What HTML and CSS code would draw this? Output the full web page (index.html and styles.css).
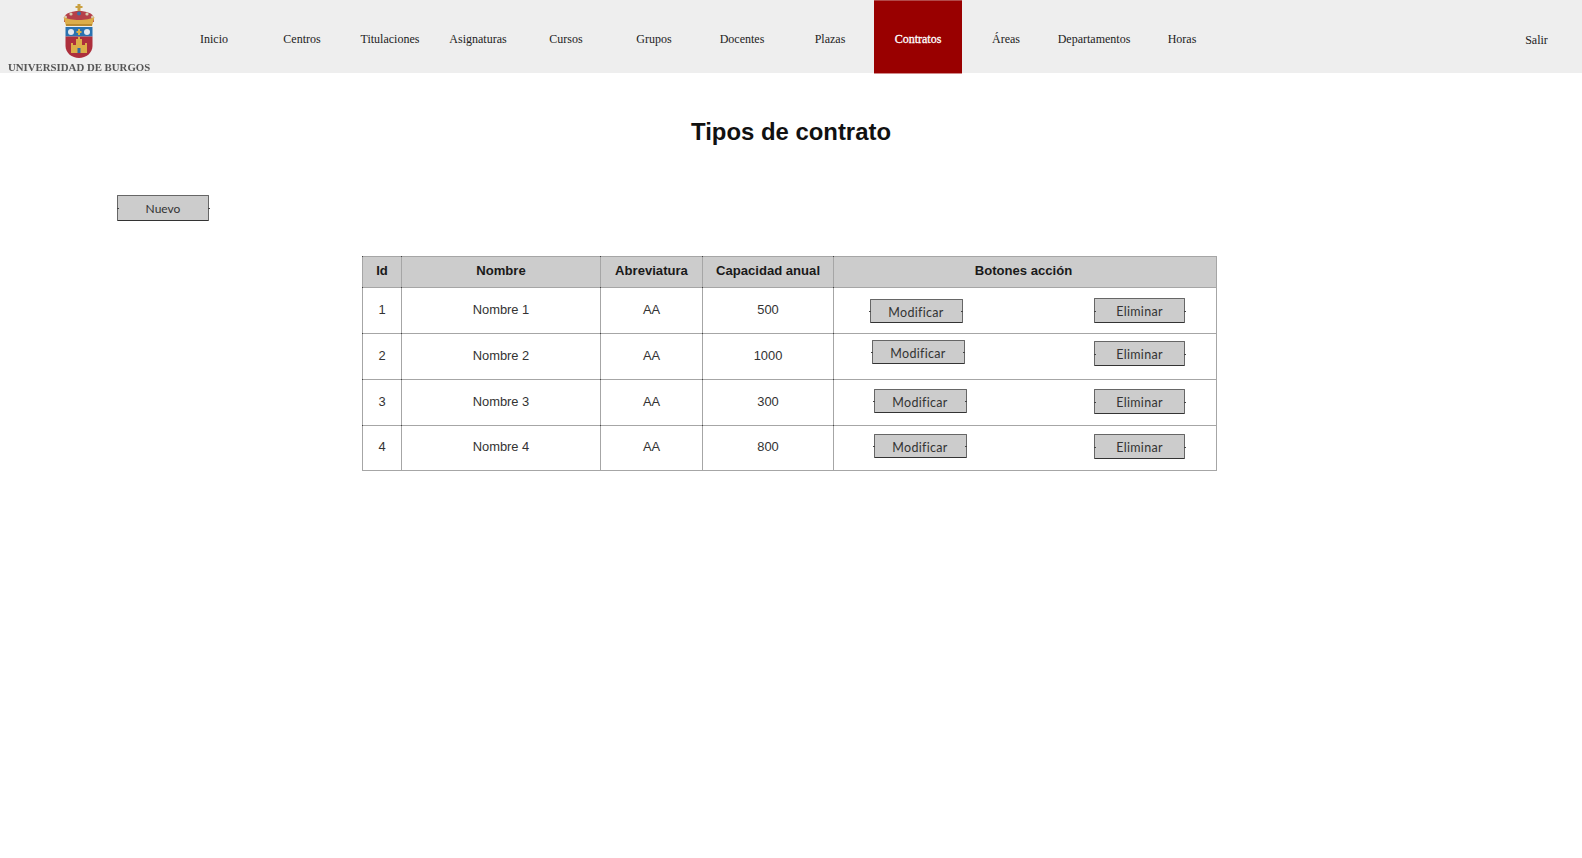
FILE: index.html
```html
<!DOCTYPE html>
<html lang="es">
<head>
<meta charset="utf-8">
<title>Tipos de contrato</title>
<link rel="stylesheet" href="styles.css">
</head>
<body>
<header class="topbar">
  <div class="brand">
    <svg class="crest" width="34" height="56" viewBox="0 0 34 56" aria-hidden="true">
      <rect x="15.5" y="1" width="3" height="8" fill="#c9a040"/>
      <rect x="13.5" y="3" width="7" height="2" fill="#c9a040"/>
      <path d="M2 15 C3 10 10 8 17 8 C24 8 31 10 32 15 L32 19 L2 19 Z" fill="#b5404a"/>
      <circle cx="3.5" cy="14" r="1.5" fill="#d8cdb0"/><circle cx="9" cy="11" r="1.6" fill="#d8cdb0"/><circle cx="17" cy="10.5" r="2" fill="#3a6ea8"/><circle cx="25" cy="11" r="1.6" fill="#d8cdb0"/><circle cx="30.5" cy="14" r="1.5" fill="#d8cdb0"/>
      <path d="M1.5 14 C8 18 26 18 32.5 14 L30 23 L4 23 Z" fill="#dcae4a"/>
      <rect x="4" y="21" width="26" height="2" fill="#b98a30"/>
      <path d="M3.5 24 H30.5 V33.5 H3.5 Z" fill="#2a72b0"/>
      <circle cx="9" cy="29" r="3" fill="#e3e8ee"/><circle cx="25" cy="29" r="3" fill="#e3e8ee"/>
      <rect x="16" y="26" width="2" height="6" fill="#d6b04a"/><rect x="14.5" y="28" width="5" height="2" fill="#d6b04a"/>
      <path d="M3.5 33.5 H30.5 V43 C30.5 50 24 55 17 55 C10 55 3.5 50 3.5 43 Z" fill="#ad2f3c"/>
      <path d="M9 50 V40 H11 V42 H14 V36 H16 V34 H18 V36 H20 V42 H23 V40 H25 V50 Z" fill="#dcae48"/>
      <rect x="15.5" y="45" width="3" height="5" fill="#2f6aa0"/>
    </svg>
    <span class="brand-name">UNIVERSIDAD DE BURGOS</span>
  </div>
  <nav class="menu">
    <a class="menu-item">Inicio</a>
    <a class="menu-item">Centros</a>
    <a class="menu-item">Titulaciones</a>
    <a class="menu-item">Asignaturas</a>
    <a class="menu-item">Cursos</a>
    <a class="menu-item">Grupos</a>
    <a class="menu-item">Docentes</a>
    <a class="menu-item">Plazas</a>
    <a class="menu-item is-active">Contratos</a>
    <a class="menu-item">Áreas</a>
    <a class="menu-item">Departamentos</a>
    <a class="menu-item">Horas</a>
  </nav>
  <a class="logout">Salir</a>
</header>

<main class="content">
  <h1 class="title">Tipos de contrato</h1>
  <div class="toolbar"><button class="sketch-btn btn-new">Nuevo</button></div>
  <table class="data">
    <colgroup>
      <col class="c-id"><col class="c-name"><col class="c-abbr"><col class="c-cap"><col class="c-act">
    </colgroup>
    <thead>
      <tr><th>Id</th><th>Nombre</th><th>Abreviatura</th><th>Capacidad anual</th><th class="th-actions">Botones acción</th></tr>
    </thead>
    <tbody>
      <tr class="r1">
        <td>1</td><td>Nombre 1</td><td>AA</td><td>500</td>
        <td class="cell-actions"><div class="actions a1"><button class="sketch-btn btn-mod">Modificar</button><button class="sketch-btn btn-del">Eliminar</button></div></td>
      </tr>
      <tr class="r2">
        <td>2</td><td>Nombre 2</td><td>AA</td><td>1000</td>
        <td class="cell-actions"><div class="actions a2"><button class="sketch-btn btn-mod">Modificar</button><button class="sketch-btn btn-del">Eliminar</button></div></td>
      </tr>
      <tr class="r3">
        <td>3</td><td>Nombre 3</td><td>AA</td><td>300</td>
        <td class="cell-actions"><div class="actions a3"><button class="sketch-btn btn-mod">Modificar</button><button class="sketch-btn btn-del">Eliminar</button></div></td>
      </tr>
      <tr class="r4">
        <td>4</td><td>Nombre 4</td><td>AA</td><td>800</td>
        <td class="cell-actions"><div class="actions a4"><button class="sketch-btn btn-mod">Modificar</button><button class="sketch-btn btn-del">Eliminar</button></div></td>
      </tr>
    </tbody>
  </table>
</main>
</body>
</html>
```
FILE: styles.css
```css
* { box-sizing: border-box; }
html, body { margin: 0; height: 100%; background: #fff; }
body { font-family: "Liberation Sans", Arial, sans-serif; color: #222; overflow: hidden; }

.topbar { display: flex; align-items: stretch; height: 73px; background: #eeeeee; }
.brand { width: 170px; display: flex; flex-direction: column; align-items: flex-start; padding: 3px 0 0 8px; }
.crest { margin-left: 54px; display: block; filter: blur(.5px); }
.brand-name { font-family: "Liberation Serif", serif; font-weight: 700; font-size: 10.8px; line-height: 11px; color: #555; white-space: nowrap; margin-top: 3px; filter: blur(.3px); }
.menu { display: flex; }
.menu-item { width: 88px; display: flex; align-items: center; justify-content: center; font-family: "Liberation Serif", serif; font-size: 12px; color: #222; padding-top: 5px; }
.menu-item.is-active { background: #990000; color: #fff; -webkit-text-stroke: .3px #fff; margin-bottom: -1px; border-top: 1px solid #b24a4a; border-bottom: 1px solid #d08a8a; }
.logout { margin-left: auto; width: 90px; display: flex; align-items: center; justify-content: center; font-family: "Liberation Serif", serif; font-size: 12px; color: #222; padding: 7px 1px 0 0; }

.content { display: flex; flex-direction: column; }
.title { margin: 45px 0 0; height: 28px; line-height: 28px; text-align: center; font-size: 23.9px; font-weight: 700; color: #111; }
.toolbar { padding: 49px 0 0 117px; height: 110px; }

.sketch-btn { display: block; padding: 2px 0 0; background: #cccccc; border: 1.5px solid #666; border-bottom-color: #333; border-radius: 1px; font-family: "Lato", sans-serif; font-size: 12.5px; letter-spacing: .3px; color: #333; position: relative; }
.sketch-btn::before, .sketch-btn::after { content: ""; position: absolute; top: 50%; width: 2px; height: 1px; background: #444; }
.sketch-btn::before { left: -1.5px; }
.sketch-btn::after { right: -1.5px; }
.btn-new { width: 92px; height: 26px; padding-top: 1px; font-size: 12px; letter-spacing: 0; }
.btn-mod { width: 93px; height: 24px; }
.btn-del { width: 91px; height: 25px; }

.data { border-collapse: collapse; table-layout: fixed; width: 854px; margin-left: 362px; font-size: 12.9px; }
.c-id { width: 39px; } .c-name { width: 199px; } .c-abbr { width: 102px; } .c-cap { width: 131px; } .c-act { width: 383px; }
.data th, .data td { border: 1px solid #a6a6a6; text-align: center; padding: 0; position: relative; }
.data th::before, .data td::before { content: ""; position: absolute; left: -1px; top: -1px; width: 1px; height: 1px; background: #444; }
.data th { background: #cccccc; height: 31px; font-weight: 700; font-size: 13.1px; color: #1a1a1a; padding-bottom: 3px; }
.data th.th-actions { padding-right: 3px; }
.data td { color: #333; padding-bottom: 3px; }
.data td.cell-actions { padding: 0; vertical-align: top; }
.r1 td { height: 46px; } .r2 td { height: 46px; } .r3 td { height: 46px; } .r4 td { height: 45px; }

.actions { display: flex; justify-content: space-between; align-items: flex-start; }
.a1 { padding: 11px 31px 0 35.5px; } .a1 .btn-del { margin-top: -1px; }
.a2 { padding: 6px 31px 0 37.5px; } .a2 .btn-del { margin-top: 1px; }
.a3 { padding: 9px 31px 0 39.5px; }
.a4 { padding: 8px 31px 0 39.5px; }
```
